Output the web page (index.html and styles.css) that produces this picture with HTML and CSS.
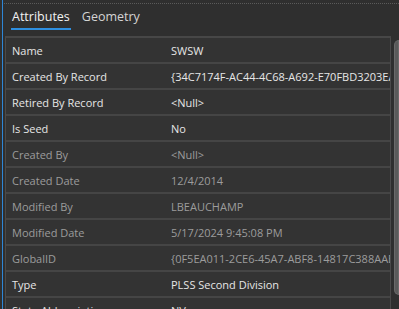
FILE: index.html
```html
<!DOCTYPE html>
<html>
<head>
<meta charset="utf-8">
<link rel="stylesheet" href="styles.css">
</head>
<body>
<div class="pane">
  <div class="header">
    <div class="tabs">
      <div class="tab active">Attributes</div>
      <div class="tab">Geometry</div>
    </div>
  </div>
  <div class="body">
    <div class="grid">
      <div class="row"><div class="k">Name</div><div class="v">SWSW</div></div>
      <div class="row"><div class="k">Created By Record</div><div class="v">{34C7174F-AC44-4C68-A692-E70FBD3203EA}</div></div>
      <div class="row"><div class="k">Retired By Record</div><div class="v">&lt;Null&gt;</div></div>
      <div class="row"><div class="k">Is Seed</div><div class="v">No</div></div>
      <div class="row ro"><div class="k">Created By</div><div class="v">&lt;Null&gt;</div></div>
      <div class="row ro"><div class="k">Created Date</div><div class="v">12/4/2014</div></div>
      <div class="row ro"><div class="k">Modified By</div><div class="v">LBEAUCHAMP</div></div>
      <div class="row ro"><div class="k">Modified Date</div><div class="v">5/17/2024 9:45:08 PM</div></div>
      <div class="row ro"><div class="k">GlobalID</div><div class="v">{0F5EA011-2CE6-45A7-ABF8-14817C388AAB}</div></div>
      <div class="row"><div class="k">Type</div><div class="v">PLSS Second Division</div></div>
      <div class="row"><div class="k">State Abbreviation</div><div class="v">NV</div></div>
    </div>
    <div class="scroll"><div class="thumb"></div></div>
  </div>
</div>
</body>
</html>
```

FILE: styles.css
```css
html, body {
  margin: 0;
  padding: 0;
  background: #2f2f2f;
  overflow: hidden;
  height: 309px;
}
body {
  font-family: "Open Sans", "Noto Sans", sans-serif;
  padding-left: 2px;
}
.pane {
  border-left: 1px solid #2e86d6;
  height: 309px;
  display: flex;
  flex-direction: column;
}
.header {
  flex: none;
  height: 33px;
  box-sizing: border-box;
  margin-top: 3px;
  margin-left: 1px;
  border-top: 1px dotted #5a5a5a;
  padding-left: 7px;
}
.tabs {
  display: flex;
  gap: 10px;
  padding-top: 4px;
}
.tab {
  font-size: 12.5px;
  color: #d4d4d4;
  height: 22px;
  line-height: 18px;
  padding: 0 1px;
  box-sizing: border-box;
}
.tab.active {
  color: #f2f2f2;
  border-bottom: 2px solid #2e8fe0;
}
.body {
  display: flex;
  flex: 1;
  min-height: 0;
  margin-left: 2px;
}
.grid {
  width: 384px;
  border-top: 2px solid #474747;
  border-left: 1px solid #4a4a4a;
  border-right: 1px solid #4a4a4a;
  background: #333333;
  overflow: hidden;
}
.row {
  display: flex;
  height: 24px;
  border-bottom: 2px solid #454545;
  align-items: center;
  font-size: 11px;
  color: #e6e6e6;
  white-space: nowrap;
}
.row.ro { color: #9c9c9c; }
.k { width: 159px; padding-left: 6px; flex: none; }
.v { flex: 1; overflow: hidden; }
.scroll {
  flex: 1;
  padding: 4px 0 14px 3px;
  display: flex;
}
.thumb {
  flex: 1;
  background: #5a5a5a;
  border: 1px solid #6a6a6a;
  border-radius: 5px 0 0 5px;
}
```
